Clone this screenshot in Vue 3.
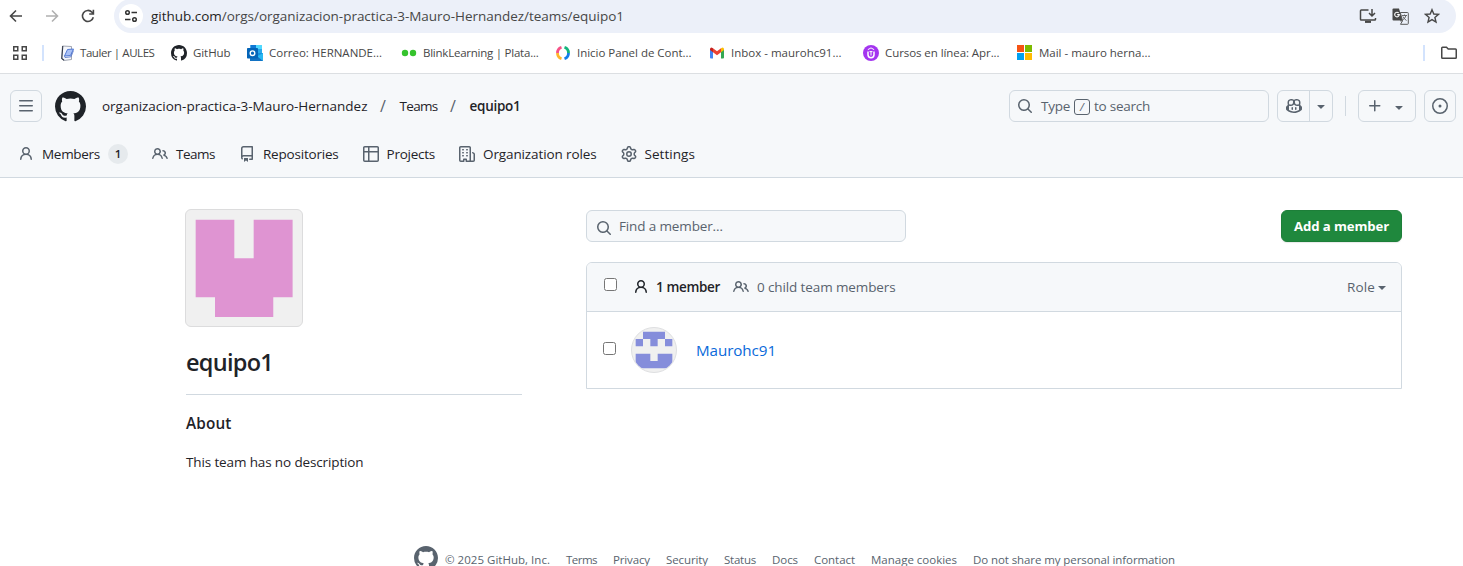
<script setup>
import { h } from 'vue'

// Tracks a label so that it fills the given width exactly.
const vFit = {
  mounted(el, { value }) {
    el.style.letterSpacing = '0px'
    const natural = el.getBoundingClientRect().width
    const count = el.textContent.length
    el.style.letterSpacing = `${(value - natural) / count}px`
    el.style.width = `${value}px`
  }
}

const icons = {
  mark: 'M8 0c4.42 0 8 3.58 8 8a8.013 8.013 0 0 1-5.45 7.59c-.4.08-.55-.17-.55-.38 0-.27.01-1.13.01-2.2 0-.75-.25-1.23-.54-1.48 1.78-.2 3.65-.88 3.65-3.95 0-.88-.31-1.59-.82-2.15.08-.2.36-1.02-.08-2.12 0 0-.67-.22-2.2.82-.64-.18-1.32-.27-2-.27-.68 0-1.36.09-2 .27-1.53-1.03-2.2-.82-2.2-.82-.44 1.1-.16 1.92-.08 2.12-.51.56-.82 1.28-.82 2.15 0 3.06 1.86 3.75 3.64 3.95-.23.2-.44.55-.51 1.07-.46.21-1.61.55-2.33-.66-.15-.24-.6-.83-1.23-.82-.67.01-.27.38.01.53.34.19.73.9.82 1.13.16.45.68 1.31 2.69.94 0 .67.01 1.3.01 1.49 0 .21-.15.45-.55.38A7.995 7.995 0 0 1 0 8c0-4.42 3.58-8 8-8Z',
  person: 'M10.561 8.073a6.005 6.005 0 0 1 3.432 5.142.75.75 0 1 1-1.498.07 4.5 4.5 0 0 0-8.99 0 .75.75 0 0 1-1.498-.07 6.004 6.004 0 0 1 3.431-5.142 3.999 3.999 0 1 1 5.123 0ZM10.5 5a2.5 2.5 0 1 0-5 0 2.5 2.5 0 0 0 5 0Z',
  people: 'M2 5.5a3.5 3.5 0 1 1 5.898 2.549 5.508 5.508 0 0 1 3.034 4.084.75.75 0 1 1-1.482.235 4 4 0 0 0-7.9 0 .75.75 0 0 1-1.482-.236A5.507 5.507 0 0 1 3.102 8.05 3.493 3.493 0 0 1 2 5.5ZM11 4a3.001 3.001 0 0 1 2.22 5.018 5.01 5.01 0 0 1 2.56 3.012.749.749 0 0 1-.885.954.752.752 0 0 1-.549-.514 3.507 3.507 0 0 0-2.522-2.372.75.75 0 0 1-.574-.73v-.352a.75.75 0 0 1 .416-.672A1.5 1.5 0 0 0 11 5.5.75.75 0 0 1 11 4Zm-5.5-.5a2 2 0 1 0-.001 3.999A2 2 0 0 0 5.5 3.5Z',
  repo: 'M2 2.5A2.5 2.5 0 0 1 4.5 0h8.75a.75.75 0 0 1 .75.75v12.5a.75.75 0 0 1-.75.75h-2.5a.75.75 0 0 1 0-1.5h1.75v-2h-8a1 1 0 0 0-.714 1.7.75.75 0 1 1-1.072 1.05A2.495 2.495 0 0 1 2 11.5Zm10.5-1h-8a1 1 0 0 0-1 1v6.708A2.486 2.486 0 0 1 4.5 9h8ZM5 12.25a.25.25 0 0 1 .25-.25h3.5a.25.25 0 0 1 .25.25v3.25a.25.25 0 0 1-.4.2l-1.45-1.087a.249.249 0 0 0-.3 0L5.4 15.7a.25.25 0 0 1-.4-.2Z',
  table: 'M0 1.75C0 .784.784 0 1.75 0h12.5C15.216 0 16 .784 16 1.75v12.5A1.75 1.75 0 0 1 14.25 16H1.75A1.75 1.75 0 0 1 0 14.25ZM6.5 6.5v8h7.75a.25.25 0 0 0 .25-.25V6.5Zm8-1.5V1.75a.25.25 0 0 0-.25-.25H6.5V5Zm-13 1.5v7.75c0 .138.112.25.25.25H5v-8ZM5 5V1.5H1.75a.25.25 0 0 0-.25.25V5Z',
  org: 'M1.75 16A1.75 1.75 0 0 1 0 14.25V1.75C0 .784.784 0 1.75 0h8.5C11.216 0 12 .784 12 1.75v12.5c0 .085-.006.168-.018.25h2.268a.25.25 0 0 0 .25-.25V8.285a.25.25 0 0 0-.111-.208l-1.055-.703a.749.749 0 1 1 .832-1.248l1.055.703c.487.325.779.871.779 1.456v5.965A1.75 1.75 0 0 1 14.25 16h-3.5a.766.766 0 0 1-.197-.026c-.099.017-.2.026-.303.026h-3a.75.75 0 0 1-.75-.75V14h-1v1.25a.75.75 0 0 1-.75.75Zm-.25-1.75c0 .138.112.25.25.25H4v-1.25a.75.75 0 0 1 .75-.75h2.5a.75.75 0 0 1 .75.75v1.25h2.25a.25.25 0 0 0 .25-.25V1.75a.25.25 0 0 0-.25-.25h-8.5a.25.25 0 0 0-.25.25ZM3.75 6h.5a.75.75 0 0 1 0 1.5h-.5a.75.75 0 0 1 0-1.5ZM3 3.75A.75.75 0 0 1 3.75 3h.5a.75.75 0 0 1 0 1.5h-.5A.75.75 0 0 1 3 3.75Zm4 3A.75.75 0 0 1 7.75 6h.5a.75.75 0 0 1 0 1.5h-.5A.75.75 0 0 1 7 6.75ZM7.75 3h.5a.75.75 0 0 1 0 1.5h-.5a.75.75 0 0 1 0-1.5ZM3 9.75A.75.75 0 0 1 3.75 9h.5a.75.75 0 0 1 0 1.5h-.5A.75.75 0 0 1 3 9.75ZM7.75 9h.5a.75.75 0 0 1 0 1.5h-.5a.75.75 0 0 1 0-1.5Z',
  gear: 'M8 0a8.2 8.2 0 0 1 .701.031C9.444.095 9.99.645 10.16 1.29l.288 1.107c.018.066.079.158.212.224.231.114.454.243.668.386.123.082.233.09.299.071l1.103-.303c.644-.176 1.392.021 1.82.63.27.385.506.792.704 1.218.315.675.111 1.422-.364 1.891l-.814.806c-.049.048-.098.147-.088.294.016.257.016.515 0 .772-.01.147.038.246.088.294l.814.806c.475.469.679 1.216.364 1.891a7.977 7.977 0 0 1-.704 1.217c-.428.61-1.176.807-1.82.63l-1.102-.302c-.067-.019-.177-.011-.3.071a5.909 5.909 0 0 1-.668.386c-.133.066-.194.158-.211.224l-.29 1.106c-.168.646-.715 1.196-1.458 1.26a8.006 8.006 0 0 1-1.402 0c-.743-.064-1.289-.614-1.458-1.26l-.289-1.106c-.018-.066-.079-.158-.212-.224a5.738 5.738 0 0 1-.668-.386c-.123-.082-.233-.09-.299-.071l-1.103.303c-.644.176-1.392-.021-1.82-.63a8.12 8.12 0 0 1-.704-1.218c-.315-.675-.111-1.422.363-1.891l.815-.806c.05-.048.098-.147.088-.294a6.214 6.214 0 0 1 0-.772c.01-.147-.038-.246-.088-.294l-.815-.806C.635 6.045.431 5.298.746 4.623a7.92 7.92 0 0 1 .704-1.217c.428-.61 1.176-.807 1.82-.63l1.102.302c.067.019.177.011.3-.071.214-.143.437-.272.668-.386.133-.066.194-.158.211-.224l.29-1.106C6.009.645 6.556.095 7.299.03 7.53.01 7.764 0 8 0Zm-.571 1.525c-.036.003-.108.036-.137.146l-.289 1.105c-.147.561-.549.967-.998 1.189-.173.086-.34.183-.5.29-.417.278-.97.423-1.529.27l-1.103-.303c-.109-.03-.175.016-.195.045-.22.312-.412.644-.573.99-.014.031-.021.11.059.19l.815.806c.411.406.562.957.53 1.456a4.709 4.709 0 0 0 0 .582c.032.499-.119 1.05-.53 1.456l-.815.806c-.081.08-.073.159-.059.19.162.346.353.677.573.989.02.03.085.076.195.046l1.102-.303c.56-.153 1.113-.008 1.53.27.161.107.328.204.501.29.447.222.85.629.997 1.189l.289 1.105c.029.109.101.143.137.146a6.6 6.6 0 0 0 1.142 0c.036-.003.108-.036.137-.146l.289-1.105c.147-.561.549-.967.998-1.189.173-.086.34-.183.5-.29.417-.278.97-.423 1.529-.27l1.103.303c.109.029.175-.016.195-.045.22-.313.411-.644.573-.99.014-.031.021-.11-.059-.19l-.815-.806c-.411-.406-.562-.957-.53-1.456a4.709 4.709 0 0 0 0-.582c-.032-.499.119-1.05.53-1.456l.815-.806c.081-.08.073-.159.059-.19a6.464 6.464 0 0 0-.573-.989c-.02-.03-.085-.076-.195-.046l-1.102.303c-.56.153-1.113.008-1.53-.27a4.44 4.44 0 0 0-.501-.29c-.447-.222-.85-.629-.997-1.189l-.289-1.105c-.029-.11-.101-.143-.137-.146a6.6 6.6 0 0 0-1.142 0ZM11 8a3 3 0 1 1-6 0 3 3 0 0 1 6 0ZM9.5 8a1.5 1.5 0 1 0-3.001.001A1.5 1.5 0 0 0 9.5 8Z',
  search: 'M10.68 11.74a6 6 0 0 1-7.922-8.982 6 6 0 0 1 8.982 7.922l3.04 3.04a.749.749 0 0 1-.326 1.275.749.749 0 0 1-.734-.215ZM11.5 7a4.499 4.499 0 1 0-8.997 0A4.499 4.499 0 0 0 11.5 7Z',
  bars: 'M1 2.75A.75.75 0 0 1 1.75 2h12.5a.75.75 0 0 1 0 1.5H1.75A.75.75 0 0 1 1 2.75Zm0 5A.75.75 0 0 1 1.75 7h12.5a.75.75 0 0 1 0 1.5H1.75A.75.75 0 0 1 1 7.75ZM1.75 12h12.5a.75.75 0 0 1 0 1.5H1.75a.75.75 0 0 1 0-1.5Z',
  copilot: 'M7.998 15.035c-4.562 0-7.873-2.914-7.998-3.749V9.338c.085-.628.677-1.686 1.588-2.065.013-.07.024-.143.036-.218.029-.183.06-.384.126-.612-.201-.508-.254-1.084-.254-1.656 0-.87.128-1.769.693-2.484.579-.733 1.494-1.124 2.724-1.261 1.206-.134 2.262.034 2.944.765.05.053.096.108.139.165.044-.057.094-.112.143-.165.682-.731 1.738-.899 2.944-.765 1.23.137 2.145.528 2.724 1.261.566.715.693 1.614.693 2.484 0 .572-.053 1.148-.254 1.656.066.228.098.429.126.612.012.076.024.148.037.218.924.385 1.522 1.471 1.591 2.095v1.872c0 .766-3.351 3.795-8.002 3.795Zm0-1.485c2.28 0 4.584-1.11 5.002-1.433V7.862l-.023-.116c-.49.21-1.075.291-1.727.291-1.146 0-2.059-.327-2.71-.991A3.222 3.222 0 0 1 8 6.303a3.24 3.24 0 0 1-.544.743c-.65.664-1.563.991-2.71.991-.652 0-1.236-.081-1.727-.291l-.023.116v4.255c.419.323 2.722 1.433 5.002 1.433ZM6.762 2.83c-.193-.206-.637-.413-1.682-.297-1.019.113-1.479.404-1.713.7-.247.312-.369.789-.369 1.554 0 .793.129 1.171.308 1.371.162.181.519.379 1.442.379.853 0 1.339-.235 1.638-.54.315-.322.527-.827.617-1.553.117-.935-.037-1.395-.241-1.614Zm4.155-.297c-1.044-.116-1.488.091-1.681.297-.204.219-.359.679-.242 1.614.091.726.303 1.231.618 1.553.299.305.784.54 1.638.54.922 0 1.28-.198 1.442-.379.179-.2.308-.578.308-1.371 0-.765-.123-1.242-.37-1.554-.233-.296-.693-.587-1.713-.7ZM6.25 9.037a.75.75 0 0 1 .75.75v1.501a.75.75 0 0 1-1.5 0V9.787a.75.75 0 0 1 .75-.75Zm4.25.75v1.501a.75.75 0 0 1-1.5 0V9.787a.75.75 0 0 1 1.5 0Z',
  caret: 'm4.427 7.427 3.396 3.396a.25.25 0 0 0 .354 0l3.396-3.396A.25.25 0 0 0 11.396 7H4.604a.25.25 0 0 0-.177.427Z',
  plus: 'M7.75 2a.75.75 0 0 1 .75.75V7h4.25a.75.75 0 0 1 0 1.5H8.5v4.25a.75.75 0 0 1-1.5 0V8.5H2.75a.75.75 0 0 1 0-1.5H7V2.75A.75.75 0 0 1 7.75 2Z',
  issue: 'M8 9.5a1.5 1.5 0 1 0 0-3 1.5 1.5 0 0 0 0 3Z M8 0a8 8 0 1 1 0 16A8 8 0 0 1 8 0ZM1.5 8a6.5 6.5 0 1 0 13 0 6.5 6.5 0 0 0-13 0Z'
}

const Icon = ({ name, size = 16 }) =>
  h('svg', { viewBox: '0 0 16 16', width: size, height: size, fill: 'currentColor' }, [h('path', { d: icons[name] })])
Icon.props = ['name', 'size']

const bookmarks = [
  { id: 'aules', text: 'Tauler | AULES', w: 74.5 },
  { id: 'github', text: 'GitHub', w: 37.5 },
  { id: 'outlook', text: 'Correo: HERNANDE...', w: 113 },
  { id: 'blink', text: 'BlinkLearning | Plata...', w: 115.5 },
  { id: 'panel', text: 'Inicio Panel de Cont...', w: 114.5 },
  { id: 'gmail', text: 'Inbox - maurohc91...', w: 110.5 },
  { id: 'udemy', text: 'Cursos en línea: Apr...', w: 114.5 },
  { id: 'ms', text: 'Mail - mauro herna...', w: 111.5 }
]

const tabs = [
  { icon: 'person', text: 'Members', w: 58, count: 1 },
  { icon: 'people', text: 'Teams', w: 39 },
  { icon: 'repo', text: 'Repositories', w: 75.5 },
  { icon: 'table', text: 'Projects', w: 48.5 },
  { icon: 'org', text: 'Organization roles', w: 113.5 },
  { icon: 'gear', text: 'Settings', w: 50.5 }
]

const footerLinks = [
  { text: 'Terms', w: 31 },
  { text: 'Privacy', w: 37 },
  { text: 'Security', w: 42 },
  { text: 'Status', w: 32 },
  { text: 'Docs', w: 26 },
  { text: 'Contact', w: 41 },
  { text: 'Manage cookies', w: 86 },
  { text: 'Do not share my personal information', w: 202 }
]
</script>

<template>
  <div class="screen">
    <div class="toolbar">
      <svg class="nav-ic" width="16" height="16" viewBox="0 0 16 16"><path d="M14 8H3M8 2.5 2.5 8 8 13.500" /></svg>
      <svg class="nav-ic off" width="16" height="16" viewBox="0 0 16 16"><path d="M2 8h11M8 2.500 13.500 8 8 13.500" /></svg>
      <svg class="nav-ic" width="16" height="16" viewBox="0 0 16 16"><path d="M13.300 9.200A5.500 5.500 0 1 1 12 4.200L13.400 5.600M13.400 1.800V6H9.200" /></svg>
      <div class="omnibox">
        <span class="site">
          <svg width="14" height="14" viewBox="0 0 14 14"><circle cx="3.500" cy="3.500" r="1.800" /><path d="M7.500 3.500H13M1 10.500h5.500" /><circle cx="10.500" cy="10.500" r="1.800" /></svg>
        </span>
        <span v-fit="473" class="t url"><b>github.com</b>/orgs/organizacion-practica-3-Mauro-Hernandez/teams/equipo1</span>
        <div class="omni-icons">
          <svg width="18" height="16" viewBox="0 0 18 16" class="ol"><path d="M9.500 2H2.300Q1.500 2 1.500 2.800V11.200Q1.500 12 2.300 12H15.700Q16.500 12 16.500 11.200V10M13 1V7.500M10 5l3 3 3-3" /><path d="M6 13.800h6" stroke-width="2.200" /></svg>
          <svg width="17" height="17" viewBox="0 0 17 17"><path d="M1.500.5H7L10.500 12.500H1.500Q.5 12.500.5 11.500V1.500Q.5.500 1.500.500Z" fill="#474747" /><path d="M6.700 5A2.300 2.300 0 1 0 7.300 6.600H5.200" fill="none" stroke="#fff" stroke-width="1.100" /><path d="M8.300 4.500H15.500Q16.300 4.500 16.300 5.300V15.500Q16.300 16.300 15.500 16.300H8.500L10.500 12.800ZM8 12.800H10.500" fill="none" stroke="#5a5a5a" stroke-width="1" /><path d="M10 7.500h5M12.500 6.500v1M14 7.500Q13.300 10.500 10.600 12M11 8.500Q12 11 14.500 12.500" fill="none" stroke="#5a5a5a" stroke-width=".9" /></svg>
          <svg width="16" height="16" viewBox="0 0 16 16" class="ol star"><path d="M8 1.700 9.800 6l4.700.4-3.600 3.100 1.100 4.600L8 11.600l-4 2.500 1.100-4.600L1.500 6.400 6.200 6Z" /></svg>
        </div>
      </div>
    </div>

    <div class="bookmarks">
      <svg class="apps" width="14" height="14" viewBox="0 0 14 14"><path d="M.75.75h4v4h-4zM9.250.750h4v4h-4zM.750 9.250h4v4h-4zM9.250 9.250h4v4h-4z" /></svg>
      <i class="sep" />
      <div class="marks">
        <span v-for="b in bookmarks" :key="b.id" class="mark">
          <svg v-if="b.id === 'aules'" width="16" height="16" viewBox="0 0 16 16"><path d="M2.500 1 11.500 1.500V14.500L4 15.500 1.500 13.500Z" fill="#f4f6fb" stroke="#8a919f" stroke-width=".8" /><path d="M2.800 1 1.800 13.500 4 15.300" fill="none" stroke="#333a49" stroke-width="1.100" /><path d="M7.500 4.500 13.500 4 10.500 10.500 4.500 11Z" fill="#a9c0f5" stroke="#456fd0" stroke-width=".9" /><path d="M4.500 11 5 12.500l6-.7L13.500 5.500" fill="none" stroke="#5e7cc9" stroke-width=".9" /></svg>
          <Icon v-else-if="b.id === 'github'" name="mark" class="dark" />
          <svg v-else-if="b.id === 'outlook'" width="16" height="16" viewBox="0 0 16 16"><path d="M3.500 0H15v8H3.500Z" fill="#28a8ea" /><path d="M3.500 0H9v4H3.500Z" fill="#0f78d4" /><path d="M9 0h6v4H9Z" fill="#50d9ff" /><path d="M3 8h13v7.300q0 .700-.700.700H3.700Q3 16 3 15.300Z" fill="#1490df" /><path d="M16 8 9 12 16 16Z" fill="#28b8f2" /><path d="M3 12h8l5 4H3Z" fill="#1272c3" /><rect y="3" width="11" height="10.500" rx=".7" fill="#0364b8" /><circle cx="5.500" cy="8.200" r="2.300" fill="none" stroke="#fff" stroke-width="1.400" /></svg>
          <svg v-else-if="b.id === 'blink'" width="16" height="16" viewBox="0 0 16 16" fill="#35c32d"><circle cx="4" cy="8" r="3.200" /><circle cx="12" cy="8" r="3.200" /></svg>
          <svg v-else-if="b.id === 'panel'" width="16" height="16" viewBox="0 0 16 16" fill="none" stroke-width="2.800"><path d="M6.500 2.200A6 6 0 0 0 2.500 8" stroke="#f65287" /><path d="M2.500 8a6 6 0 0 0 4 5.800" stroke="#ffb52b" /><path d="M9.500 2.200A6 6 0 0 1 13.500 8" stroke="#13b57d" /><path d="M13.500 8a6 6 0 0 1-4 5.800" stroke="#147dea" /></svg>
          <svg v-else-if="b.id === 'gmail'" width="16" height="16" viewBox="0 0 16 16"><path d="M1 4 4 6v7.500H2q-1 0-1-1Z" fill="#4285f4" /><path d="m15 4-3 2v7.500h2q1 0 1-1Z" fill="#34a853" /><path d="M4 3.300 8 6.300l4-3V7.200L8 10.200 4 7.200Z" fill="#ea4335" /><path d="M1 4.200Q1 2.500 2.500 2.500L4 3.300V7.200L1 5Z" fill="#c5221f" /><path d="M15 4.200Q15 2.500 13.500 2.500L12 3.300V7.200L15 5Z" fill="#fbbc04" /></svg>
          <svg v-else-if="b.id === 'udemy'" width="16" height="16" viewBox="0 0 16 16"><circle cx="8" cy="8" r="8" fill="#a435f0" /><path d="M5 6.500V9.800Q5 12.700 8 12.700T11 9.800V6.500" fill="none" stroke="#fff" stroke-width="1.500" /><path d="M4.800 4.700 8 2.900l3.200 1.800M6.500 6.600H9.500M8 6.500v4" fill="none" stroke="#fff" stroke-width="1" /></svg>
          <svg v-else width="16" height="16" viewBox="0 0 16 16"><path d="M0 0h7v7H0z" fill="#f65314" /><path d="M8 0h7v7H8z" fill="#7cbb00" /><path d="M0 8h7v7H0z" fill="#00a1f1" /><path d="M8 8h7v7H8z" fill="#ffbb00" /></svg>
          <span v-fit="b.w" class="t">{{ b.text }}</span>
        </span>
      </div>
      <i class="sep end" />
      <svg class="folder" width="16" height="14" viewBox="0 0 16 14"><path d="M.75 2Q.75 1.250 1.500 1.250H5.500L7.200 3H14.500Q15.250 3 15.250 3.750V11.500Q15.250 12.250 14.500 12.250H1.500Q.75 12.250.75 11.500Z" /></svg>
    </div>

    <header class="gh-header">
      <div class="gh-top">
        <span class="btn sq"><Icon name="bars" /></span>
        <Icon name="mark" :size="31" class="logo" />
        <span v-fit="265.5" class="t">organizacion-practica-3-Mauro-Hernandez</span>
        <span class="slash">/</span>
        <span v-fit="38" class="t">Teams</span>
        <span class="slash">/</span>
        <span v-fit="51" class="t strong">equipo1</span>
        <div class="gh-actions">
          <div class="btn search"><Icon name="search" /><span v-fit="29" class="t">Type</span><kbd>/</kbd><span v-fit="56" class="t">to search</span></div>
          <div class="btn copilot"><span><Icon name="copilot" /></span><span class="half"><Icon name="caret" /></span></div>
          <i class="vline" />
          <div class="btn create"><Icon name="plus" /><Icon name="caret" class="low" /></div>
          <div class="btn sq"><Icon name="issue" /></div>
        </div>
      </div>
      <nav class="tabs">
        <a v-for="t in tabs" :key="t.text"><Icon :name="t.icon" /><span v-fit="t.w" class="t">{{ t.text }}</span><em v-if="t.count">{{ t.count }}</em></a>
      </nav>
    </header>

    <main class="content">
      <aside>
        <svg class="team-avatar" viewBox="0 0 420 420"><path d="M35 35H175V175H245V35H386V316H316V387H105V316H35Z" fill="#df94d2" /></svg>
        <h1><span v-fit="87" class="t">equipo1</span></h1>
        <h2><span v-fit="45.5" class="t">About</span></h2>
        <p><span v-fit="177.5" class="t">This team has no description</span></p>
      </aside>
      <section>
        <div class="find-row">
          <div class="find"><Icon name="search" /><span v-fit="104" class="t">Find a member…</span></div>
          <button><span v-fit="95" class="t">Add a member</span></button>
        </div>
        <div class="box">
          <div class="box-head">
            <i class="check" />
            <Icon name="person" class="dark p1" /><span v-fit="64" class="t strong">1 member</span>
            <Icon name="people" class="p2" /><span v-fit="138.5" class="t">0 child team members</span>
            <span class="role"><span v-fit="28" class="t">Role</span><i /></span>
          </div>
          <div class="box-row">
            <i class="check" />
            <svg class="avatar" viewBox="0 0 6 6"><path d="M1.500.500H4.500V1.500H5.500V2.500H4.500V1.500H3.500V2.500H2.500V1.500H1.500V2.500H.500V1.500H1.500ZM.500 3.500H2.500V4.500H3.500V3.500H5.500V5.500H.500Z" fill="#858ddb" /></svg>
            <a v-fit="80" class="t">Maurohc91</a>
          </div>
        </div>
      </section>
    </main>

    <footer>
      <Icon name="mark" :size="24" />
      <span v-fit="105" class="t copy">© 2025 GitHub, Inc.</span>
      <a v-for="l in footerLinks" :key="l.text" v-fit="l.w" class="t">{{ l.text }}</a>
    </footer>
  </div>
</template>

<style>
body { background: #fff; }
</style>

<style scoped>
.screen {
  width: 1463px;
  height: 566px;
  overflow: hidden;
  background: #fff;
  color: #1f2328;
  font: 13.5px/20px "Open Sans", "Noto Sans", sans-serif;
}
.screen * { box-sizing: border-box; }
svg { display: block; flex: none; }
.t { display: inline-block; white-space: nowrap; flex: none; }
.strong { font-weight: 600; }
.dark { color: #1f2328; }

.toolbar { display: flex; align-items: center; height: 33px; padding-left: 8px; }
.nav-ic { fill: none; stroke: #474747; stroke-width: 1.6; margin-right: 20px; margin-top: -1px; }
.nav-ic.off { stroke: #b0b0b0; }
.omnibox {
  display: flex;
  align-items: center;
  width: 1342px;
  height: 34px;
  margin: -1px 0 0 -2px;
  border-radius: 17px;
  background: #ecf0f9;
  padding: 0 16px 0 5px;
}
.site { display: grid; place-items: center; width: 24px; height: 24px; border-radius: 50%; background: #fff; }
.site svg { fill: none; stroke: #333; stroke-width: 1.5; }
.url { margin-left: 8px; color: #474747; }
.url b { font-weight: 400; color: #1f1f1f; }
.omni-icons { display: flex; align-items: center; gap: 15px; margin-left: auto; }
.ol { fill: none; stroke: #474747; stroke-width: 1.5; }
.star { stroke-width: 1.4; }

.bookmarks { display: flex; align-items: center; height: 40px; padding-left: 13px; font-size: 11.5px; color: #474747; }
.bookmarks .t { line-height: 18px; margin-top: -1px; }
.apps { fill: none; stroke: #474747; stroke-width: 1.5; }
.sep { width: 2px; height: 16px; margin-left: 15px; background: #d3e3fd; flex: none; }
.marks { display: grid; grid-template-columns: 111px 76px 154px 154px 154px 154px 154px 150px; margin-left: 16px; }
.mark { display: flex; align-items: center; gap: 6px; }
.mark:first-child { gap: 4px; }
.sep.end { margin-left: auto; }
.folder { margin: 0 6px 0 16px; fill: none; stroke: #474747; stroke-width: 1.5; }

.gh-header { height: 105px; background: #f6f8fa; border-top: 1px solid #dcdfe2; border-bottom: 1px solid #d1d9e0; }
.gh-top { display: flex; align-items: center; height: 32px; margin: 16px 7px 0 10px; }
.btn { display: flex; align-items: center; height: 32px; border: 1px solid #d1d9e0; border-radius: 6px; color: #59636e; }
.sq { width: 32px; justify-content: center; }
.logo { margin: 0 16px 0 13px; color: #1f2328; }
.slash { width: 32px; padding-right: 1px; text-align: center; color: #59636e; font-size: 16px; }
.gh-actions { display: flex; align-items: center; margin-left: auto; }
.search { width: 260px; padding-left: 7px; }
.search .t:nth-child(2) { margin-left: 8px; }
.search kbd { width: 16px; height: 16px; margin: 1px 4px 0 4px; border: 1px solid #59636e; border-radius: 3px; font: italic 11px/13px "Open Sans", sans-serif; text-align: center; }
.copilot { width: 56px; margin-left: 8px; }
.copilot span { display: grid; place-items: center; width: 31px; height: 30px; }
.copilot .half { width: 23px; border-left: 1px solid #d1d9e0; }
.vline { width: 1px; height: 20px; margin: 0 12px; background: #d1d9e0; }
.create { width: 58px; margin-right: 8px; padding-left: 8px; gap: 8px; }
.low { margin-top: 2px; }
.tabs { display: flex; gap: 24px; margin: 22px 0 0 18px; }
.tabs a { display: flex; align-items: center; gap: 8px; height: 20px; }
.tabs svg { color: #59636e; }
.tabs em { width: 20px; height: 20px; border-radius: 10px; background: #e6eaed; font: 600 11.5px/20px "Open Sans", sans-serif; text-align: center; }

.content { display: flex; height: 367px; }
aside { width: 336px; margin-left: 186px; }
.team-avatar { width: 118px; height: 118px; margin: 31px 0 0 -1px; border: 1px solid #dcdcdd; border-radius: 6px; background: #f0f0f0; }
h1 { height: 68px; margin: 0; padding-top: 19px; border-bottom: 1px solid #d1d9e0; font-size: 23.500px; font-weight: 600; line-height: 32px; }
h2 { margin: 17px 0 0; font-size: 15.3px; font-weight: 600; line-height: 22px; }
p { margin: 18px 0 0; }
section { width: 816px; margin-left: 64px; padding-top: 32px; }
.find-row { display: flex; justify-content: space-between; }
.find { display: flex; align-items: center; width: 320px; height: 32px; padding-left: 9px; border: 1px solid #d1d9e0; border-radius: 6px; background: #f6f8fa; color: #59636e; }
.find svg { margin: 3px 7px 0 0; }
button { width: 121px; height: 32px; padding: 0; border: 1px solid #1d7f39; border-radius: 6px; background: #1f883d; color: #fff; font: 700 13.2px/20px "Open Sans", sans-serif; box-shadow: 0 1px 1px #1f23281a; }
.box { margin-top: 20px; border: 1px solid #d1d9e0; border-radius: 6px 6px 0 0; }
.box-head { display: flex; align-items: center; height: 49px; padding: 0 15px 0 17px; border-bottom: 1px solid #d1d9e0; border-radius: 5px 5px 0 0; background: #f6f8fa; color: #59636e; }
.box-head .strong { color: #1f2328; }
.check { flex: none; width: 13px; height: 13px; margin-bottom: 5px; border: 1px solid #767676; border-radius: 2.500px; background: #fff; }
.p1 { margin: 0 7px 0 16px; }
.p2 { margin: 0 8px 0 13px; }
.role { display: flex; align-items: center; gap: 3px; margin-left: auto; }
.role i { border: 4px solid transparent; border-top-color: currentColor; border-bottom-width: 0; margin-top: 1px; }
.box-row { display: flex; align-items: center; height: 76px; padding-left: 16px; }
.box-row .check { margin-bottom: 3px; }
.avatar { width: 46px; height: 46px; margin: 0 19px 0 15px; border-radius: 50%; border: 1px solid #dedfe1; background: #f0f0f0; }
.box-row a { color: #0969da; font-size: 15.200px; line-height: 24px; }
footer { display: flex; align-items: flex-start; margin-top: 1px; padding-left: 414px; gap: 16px; color: #59636e; font-size: 11.500px; line-height: 12px; }
footer .t { margin-top: 8px; }
footer .copy { margin-left: -9px; }
</style>
